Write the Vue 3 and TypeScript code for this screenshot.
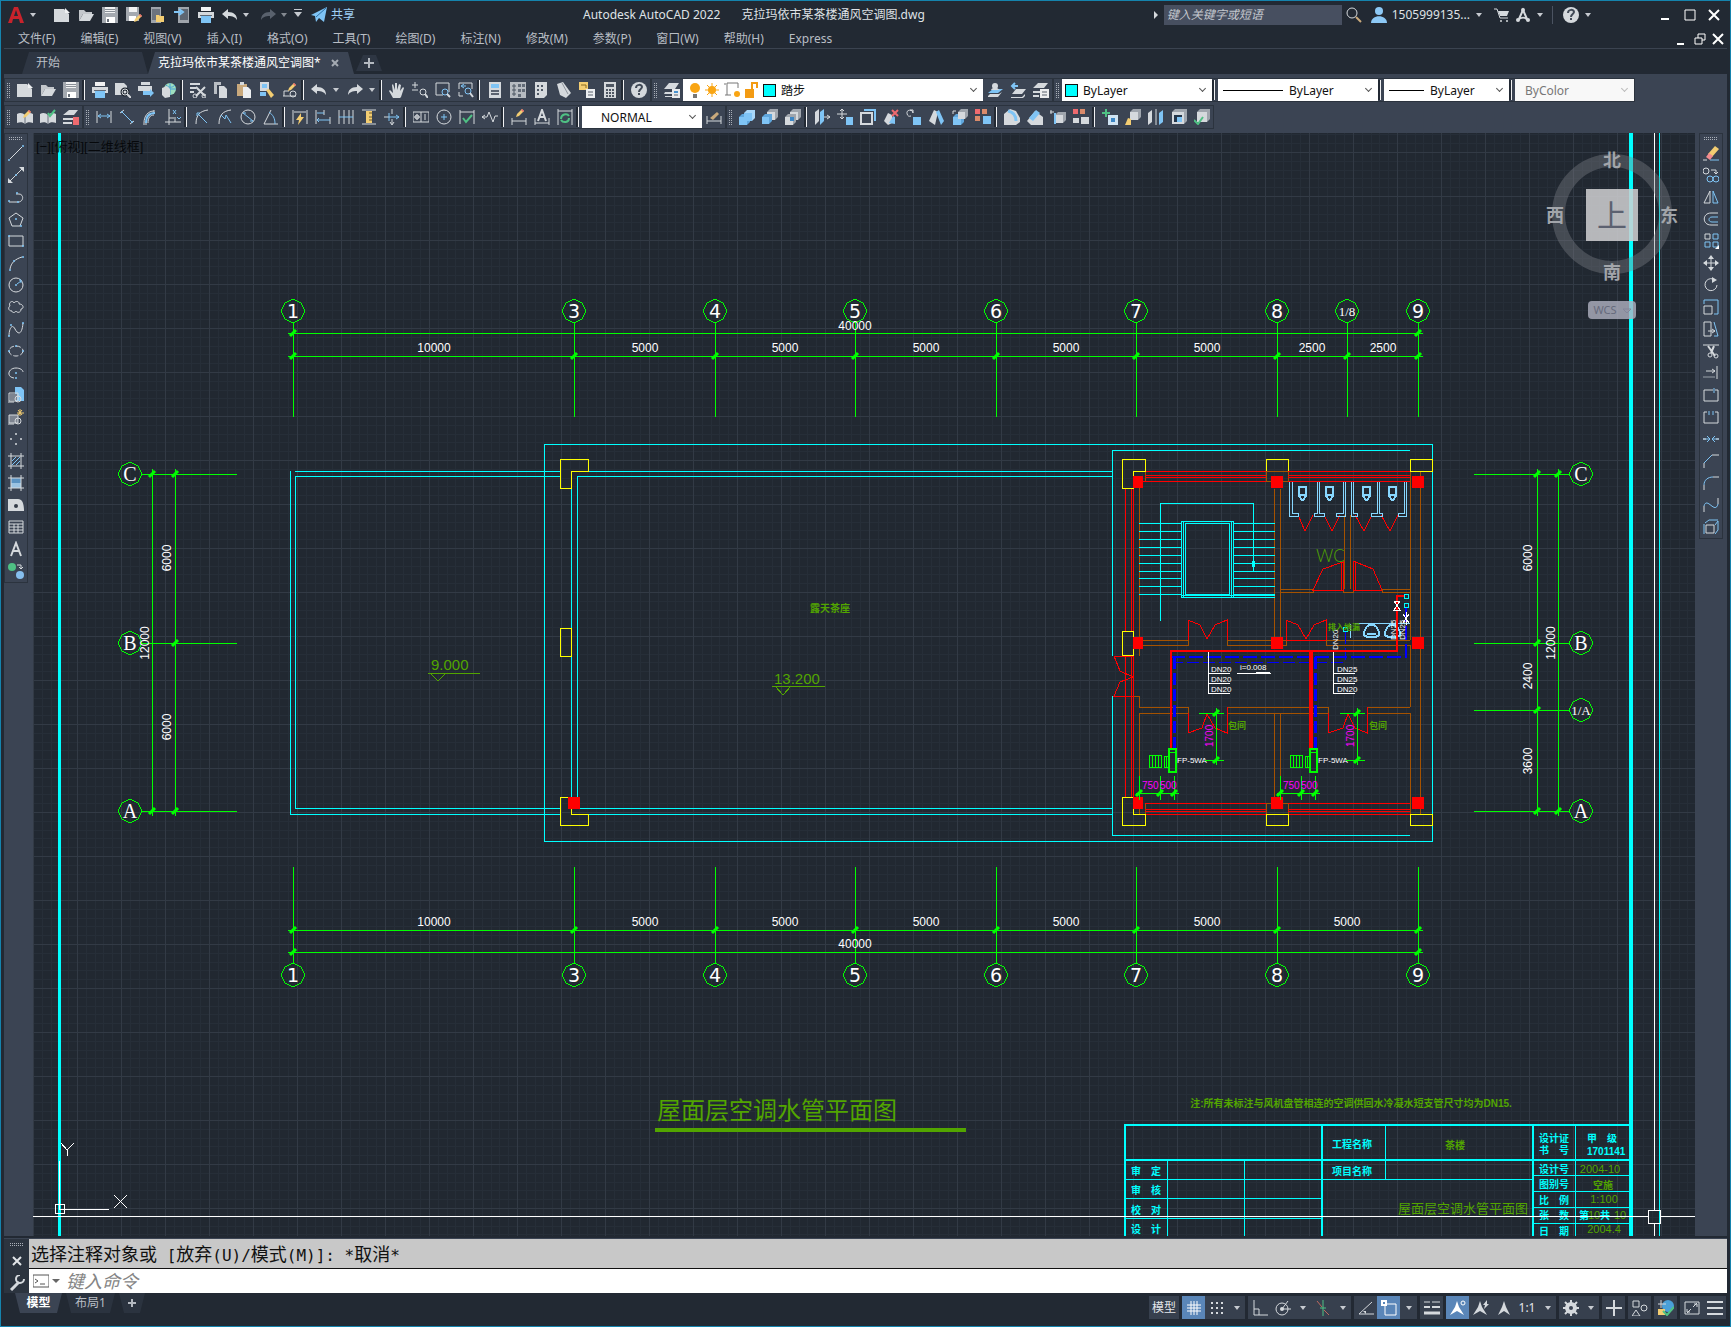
<script setup lang="ts">
import { ref } from 'vue'

const W = '#d5d9dd'
const B = '#7fc4f5'
const Y = '#f3cd72'
const G = '#4fc184'
const R = '#ee6a6f'
const D = '#3b4453'

const s = (d: string, c = W, w = 1) => `<path d="${d}" fill="none" stroke="${c}" stroke-width="${w}"/>`
const p = (d: string, c = W) => `<path d="${d}" fill="${c}"/>`
const ring = (x: number, y: number, r: number, c = W, w = 1) =>
  `<circle cx="${x}" cy="${y}" r="${r}" fill="none" stroke="${c}" stroke-width="${w}"/>`
const dot = (x: number, y: number, c = B, r = 1) => `<circle cx="${x}" cy="${y}" r="${r}" fill="${c}"/>`
const cube = (x: number, y: number, z: number, c = W, side = '#9fa5ad') =>
  p(`M${x} ${y + 3}l3-3h${z}v${z}l-3 3h-${z}z`, side) + p(`M${x} ${y + 3}h${z}v${z}h-${z}z`, c)
const pencil = (x: number, y: number) =>
  p(`M${x} ${y + 8}l1-3 5-5 2 2-5 5z`, Y) + p(`M${x + 5} ${y + 1}l1-1 2 2-1 1z`, R)

const icons: Record<string, string> = {
  new: p('M0 2h10l5 5v8H0z') + p('M11 1l5 5h-5z', '#eef0f2'),
  open: p('M1 14V3h5l2 2h6v2H5z', '#c3c7cc') + p('M1 14L5 7h11l-4 7z'),
  save: p('M0 0h16v16H0z', '#a4a9b0') + p('M3 0h10v6H3z', '#f1f2f3') + s('M3 2.500h10M3 4.500h10', '#8a9098') + p('M4 10h9v6H4z', '#fff') + p('M5 12h2v3H5z', '#6a717b'),
  saveas: p('M0 0h13v14H0z', '#a4a9b0') + p('M3 0h8v5H3z', '#f1f2f3') + p('M3 9h7v5H3z', '#fff') + pencil(8, 7),
  mobileOpen: p('M1 0h10v16H1z', '#9fa4ab') + p('M2 2h8v11H2z', '#6c737e') + p('M6 8h3l1 1h4v6H6z', Y),
  mobileSave: p('M4 0h11v16H4z', '#9fa4ab') + p('M6 2h8v11H6z', '#5e6672') + s('M0 5h7M5 2l4 3-4 3', B, 2),
  print: p('M3 0h10v4H3z', '#f1f2f3') + p('M0 5h16v6H0z') + p('M3 9h10v7H3z', B) + p('M2 8h12v1H2z', '#616975'),
  preview: p('M0 1h9l3 3v9H0z') + ring(10, 10, 3, '#1d242d', 3) + ring(10, 10, 3) + s('M12 12l4 4', W, 2),
  publish: p('M3 0h9v3H3zM0 4h14v5H0z') + p('M5 9h7V7l4 4-4 4v-2H5z', B),
  globe: dot(9, 7, '#9fe0c0', 6) + s('M3 7h12M9 1v12M5 3c3 3 6 3 9 0', '#4aa0d8') + p('M1 6l5-2 3 3v8l-5 1-3-3z'),
  cut: p('M0 1h10v2H0zM0 5h6v2H0zM0 9h4v2H0z') + s('M6 5l9 9M15 5l-9 9', W, 2) + ring(5, 14, 2) + ring(14, 14, 2),
  copy: p('M1 0h7v3H4v9H1z', '#b8bdc3') + p('M5 4h6l3 3v9H5z') + s('M5.500 4v12', D),
  paste: p('M1 2h10v12H1z', '#c9a97c') + p('M4 0h4v3H4z') + p('M7 5h5l3 3v8H7z', '#eceef0'),
  match: p('M1 0h9v9H1z') + p('M3 2h5v4H3z', B) + p('M1 10h6v4H1z', B) + p('M7 8l3-1 5 6-3 3z', Y),
  blockedit: s('M1 14h13M2 14V9h5') + ring(11, 12, 3) + pencil(6, 1),
  undo: p('M0 7l6-5v3c6 0 9 3 9 8-2-3-4-4-9-4v3z'),
  redo: p('M16 7l-6-5v3C4 5 1 8 1 13c2-3 4-4 9-4v3z'),
  redoDim: p('M16 7l-6-5v3C4 5 1 8 1 13c2-3 4-4 9-4v3z', '#59616d'),
  hand: p('M4 16L0 9l1-1 3 3L3 3l1-1 2 6V1h2v7l2-6 2 1-1 6 3-4 1 1-3 9-1 1z'),
  zoomRt: s('M3 0v6M0 3h6M0 8h6') + ring(11, 10, 3) + s('M13 12l3 4', W, 2),
  zoomWin: s('M1 1h13v9M1 1v12h7', W, 1) + ring(10, 10, 3, B) + s('M12 12l3 3', W, 2),
  zoomPrev: s('M1 7V1h13v6M1 10v4h4', W) + ring(10, 9, 3, B) + s('M12 11l3 4', W, 2) + s('M8 4H4M6 2L3 4l3 2', B),
  props: p('M2 0h12v16H2z') + p('M4 2h8v4H4z', B) + s('M4 9h8M4 12h8', '#5b6370', 2),
  center: p('M0 0h16v16H0z', '#b6bbc1') + s('M4 2v12M2 4h4M2 8h4M2 12h4', '#4d5663') + p('M8 2h3v3H8zM12 2h3v3h-3zM8 7h3v3H8zM12 7h3v3h-3zM8 12h3v3H8z', '#626b77'),
  palette: p('M2 0h12v13l-3 3H2z') + p('M4 3h2v2H4zM8 3h2v2H8zM4 7h2v2H4zM8 7h2v2H8zM4 11h2v2H4z', '#4d5663'),
  sheets: p('M1 2l6-2 8 11-5 5-6-3z') + s('M6 1l6 11', '#8d939b'),
  markup: p('M0 0h9v8H0z', Y) + s('M2 3h5v3', '#8b6a20') + p('M7 7h9v9H7z', '#eceef0') + s('M9 10h5M9 13h5', '#58616d'),
  calc: p('M2 0h12v16H2z') + p('M4 2h8v3H4z', '#4d5663') + s('M4 8h8M4 11h8M4 14h8', '#4d5663', 2) + s('M6.500 6v9M9.500 6v9', W),
  help: dot(8, 8, W, 8) + s('M5 6c0-4 6-4 6-1 0 2-3 2-3 5', '#414a57', 2) + p('M7 11h2v2H7z', '#414a57'),
  layers: p('M0 7l5-6h10l-4 6zM1 10h7v2H0zM1 14h7v1H1z') + p('M8 7h8v9H8z', '#e9ebed') + p('M10 9h4v2h-4z', '#4a93cf') + s('M10 13h4', '#58616d'),
  layerCur: p('M1 11l5-4h10l-5 4z', B) + p('M1 14l2-2h9l3-2-4 5H1z') + dot(8, 4, W, 3) + p('M4 8c1-3 7-3 8 0z'),
  layerPrev: p('M2 12l4-5h10l-4 5zM1 15h11l3-3v2l-2 2H1z') + s('M8 4H2M5 1L2 4l3 3', B, 2),
  layerSt: p('M0 6l5-5h10l-4 5zM0 9h8v2H0zM0 13h6v2H0z') + p('M7 7h9v9H7z', '#eceef0') + s('M9 10h5M9 13h5', '#58616d'),
  refEdit: p('M0 5c3-2 6-1 8 1 2-2 5-3 8-1v9c-3-1-6-1-8 1-2-2-5-2-8-1z') + s('M8 6v9', '#68717d') + pencil(6, 1),
  refOk: p('M0 5c3-2 6-1 8 1 2-2 5-3 8-1v9c-3-1-6-1-8 1-2-2-5-2-8-1z') + s('M8 6v9', '#68717d') + s('M8 4l2 3 5-6', G, 2),
  refLayer: p('M0 6l6-5h9l-4 5zM0 9h10v2H0zM0 13h9v2H0z') + p('M10 8h6v8h-6z', R),
  dimLin: s('M1 2v12M15 2v12') + s('M2 7h12M5 5L2 7l3 2M11 5l3 2-3 2', B),
  dimAl: s('M1 4l4-3M11 15l4-3') + s('M3 3l10 10', B) + dot(3, 3, B, 1) + dot(13, 13, B, 1),
  dimArc: s('M1 15h4M12 1v4M2 14C2 7 6 2 12 2M6 14c0-5 2-8 6-8') + s('M4 14C4 8 7 4 13 4', B, 2),
  dimOrd: s('M4 0v16M0 13h16M10 8v5M4 9h5') + s('M8 1l3 4M11 1L8 5M12 8l2 2 2-2', B),
  dimRad: s('M14 1C6 2 2 6 2 15') + s('M4 5l9 9M3 4l3 0M3 4v3', B),
  dimJog: s('M14 1C6 2 2 6 2 15') + s('M4 6l4 4 1-4 5 8', B),
  dimDia: ring(8, 8, 7) + s('M3 4l10 8M3 4h3M13 12h-3', B),
  dimAng: s('M8 1L1 15h14') + s('M6 3c4 3 6 6 6 12', B),
  dimQ: s('M1 1v14M15 1v14M2 3h12') + p('M9 4L4 11h3l-1 5 6-8H9z', Y),
  dimBase: s('M1 1v14M9 1v5M15 8v7') + s('M2 4h7M2 11h13M4 9l-2 2 2 2', B),
  dimCont: s('M1 1v14M6 1v14M11 1v14M15 1v14') + s('M1 8h14', B),
  dimSpace: s('M1 1h14M1 15h14') + p('M5 2h6v12H5z', Y) + s('M8 4h3M8 8h3M8 11h3', '#6d5a2a'),
  dimBreak: s('M8 0v5M8 10v5M6 13l2 3 2-3M0 8h5') + s('M5 8h10M12 6l3 2-3 2M5 4v8', B),
  tol: s('M0 3h16v10H0zM8 3v10') + ring(4, 8, 2) + s('M4 5v6M1 8h6M12 5v6', W),
  centerMark: ring(8, 8, 7) + s('M8 5v6M5 8h6', B),
  inspect: s('M1 1v14M15 1v14M1 3h14') + s('M4 9l3 4 6-7', G, 2),
  jogLine: s('M0 8h5M3 6L0 8l3 2') + s('M5 8l2-5 4 10 2-6h3', W),
  dimEdit: s('M1 9v7M15 9v7M1 12h14', W) + pencil(5, 0),
  dimText: s('M1 9v7M15 9v7M1 14h14', W) + s('M4 12L8 1l4 11M6 8h4', W, 2),
  dimUpd: s('M1 0v16M15 0v16M1 2h14', W) + s('M4 10c0-5 6-6 8-3M12 9c0 5-6 5-8 2', G, 2),
  dimStyle: s('M1 7v8M15 7v8M1 12h14', W) + p('M4 9l7-6 2 2-6 6z', '#c9a97c'),
  union: cube(0, 5, 8, B, '#5fa6dc') + cube(5, 1, 8, B, '#a9d8fa'),
  subtract: cube(5, 0, 8) + cube(0, 5, 7, B, '#5fa6dc'),
  intersect: cube(5, 0, 8) + cube(0, 5, 8) + p('M5 8h4v4H5z', '#3c86c4'),
  extrudeF: p('M1 3l4-3v12l-4 4z') + p('M6 3l4-3v12l-4 4z', B) + s('M10 8h6M13 6l3 2-3 2'),
  moveF: s('M5 0v10M0 5h10M3 2l2-2 2 2M3 8l2 2 2-2') + p('M9 8h7v8H9z', B),
  offsetF: s('M1 4h11v11H1z', W, 2) + s('M4 1h11v11', B, 2),
  deleteF: p('M1 12l4-8 4 2v8l-4 2z') + p('M6 14l4-7 2 1v7z', B) + s('M9 1l6 6M15 1L9 7', R, 2),
  rotateF: s('M7 4a3 3 0 1 0-2 3M4 1l3 0v3') + p('M7 8h8v8H7z', B),
  taperF: p('M0 12L5 1l4 2-3 13z') + p('M7 3l3-2 5 11-3 4z', B),
  copyF: cube(1, 5, 8, B, '#5fa6dc') + cube(6, 0, 7) + s('M1 5V2h3'),
  colorF: p('M0 0h5v5H0z', R) + p('M7 0h5v5H7zM0 7h5v5H0z', '#d98a6a') + p('M8 7h8v8H8z', B),
  filletE: p('M0 16V5l6-5 6 2 4 7v4l-4 3z') + s('M4 2c5 1 8 4 8 10', B, 3),
  chamferE: p('M0 12L8 2l8 6v8H4z') + p('M2 9l7-8 4 3-7 8z', B),
  copyE: cube(5, 3, 8) + s('M5 4v11', B, 2) + s('M0 3h4M1 1v4'),
  colorE: p('M0 0h5v5H0z', R) + p('M7 0h5v5H7z', '#d98a6a') + p('M0 9h6v5H0zM8 8h8v7H8z'),
  imprint: s('M4 0v8M0 4h8', G, 2) + p('M6 6h10v10H6z', '#cfe3f2') + p('M9 9h4v4H9z', '#3c86c4'),
  clean: cube(5, 0, 8) + p('M0 16l3-7 3 1v6z', Y),
  separate: p('M0 4l4-3v12l-4 3z') + p('M11 4l4-3v12l-4 3z', B) + s('M8 0v16', W),
  shell: cube(1, 0, 12) + p('M3 6h8v7H3z', '#24364a') + p('M6 8h5v5H6z', B),
  check: cube(3, 0, 10) + s('M0 11l4 4 5-7', G, 2),

  line: s('M2 14L14 2', W) + dot(1, 15) + dot(15, 1),
  xline: s('M2 14L14 2', W) + p('M0 16v-5l5 5zM16 0v5l-5-5z') + dot(8, 8),
  pline: s('M1 13h9c6 0 6-8 1-8H8', W) + dot(1, 12) + dot(9, 4) + dot(10, 13),
  polygon: s('M8 2l7 5-3 8H4L1 7z') + dot(8, 8) + dot(13, 15),
  rect: s('M1 3h14v10H1z') + dot(1, 3) + dot(15, 13),
  arc: s('M2 14C3 8 7 4 14 2', W) + dot(2, 15) + dot(6, 6) + dot(15, 2),
  circle: ring(8, 8, 7) + dot(8, 8) + s('M9 7l4-3M11 3h2v3', B),
  cloud: s('M4 12c-4 0-4-4-2-5-2-4 3-6 4-3 2-3 6-1 5 1 5 0 5 5 2 5 0 4-4 4-5 2-1 2-4 2-4 0z'),
  spline: s('M1 15C1 8 4 2 7 8s7 6 8-6') + dot(1, 15) + dot(3, 4) + dot(15, 2),
  ellipse: '<ellipse cx="8" cy="8" rx="7" ry="5" fill="none" stroke="#d5d9dd" stroke-dasharray="5 2"/>' + dot(1, 8) + dot(8, 3) + dot(15, 8),
  ellArc: s('M6 13C-2 12 0 3 8 3c4 0 7 2 7 4') + dot(8, 8) + dot(8, 13),
  insert: p('M7 0h6l3 3v11H7z', B) + p('M2 7h7v6H2z', '#7d8490') + s('M1 6h9v8H1zM0 15h6') + ring(10, 12, 3),
  block: p('M1 6h9v8H1z', '#7d8490') + s('M1 6h9v8H1zM0 15h6') + ring(10, 12, 3) + s('M12 0v7M9 4h7M10 1l4 5M14 1l-4 5', Y),
  points: dot(8, 3, W) + dot(3, 8, W) + dot(13, 8, W) + dot(8, 13, W),
  hatch: s('M0 3h16M0 13h16M3 0v16M13 0v16') + s('M4 8l4-4M4 12l8-8M8 12l4-4', B),
  gradient: p('M3 3h10v10H3z', '#5b93c2') + p('M3 8h10v5H3z', '#9bc3e2') + s('M0 3h16M0 13h16M3 0v16M13 0v16'),
  region: p('M0 2h10c4 0 6 4 6 12H0z') + dot(8, 9, '#333b48', 2),
  table: s('M1 2h14v12H1zM1 5h14M1 8h14M1 11h14M6 5v9M10 5v9'),
  mtext: s('M3 15L8 2l5 13M5 10h6', W, 2),
  addSel: dot(4, 4, G, 4) + dot(12, 12, '#86bfee', 4) + s('M9 2h4v4M11 4l2 2 2-2'),

  erase: s('M0 15h4') + s('M7 15h9', B) + p('M5 9L12 1l4 3-7 8z', Y) + p('M3 12l3-4 4 3-3 4z', '#f28b8f'),
  copyObj: ring(3, 4, 3) + s('M8 3h5v4M11 5l2 2 2-2') + ring(7, 12, 3, B) + ring(13, 12, 3, B),
  mirror: s('M7 2v12H1z') + s('M10 2v12h5z', B),
  offset: s('M15 2H8C-1 2-1 14 8 14h7') + s('M15 6H9c-4 0-4 5 0 5h6', B),
  array: s('M2 1h5v5H2z') + s('M10 1h5v5h-5zM2 9h5v5H2zM10 9h5v5h-5z', B) + p('M16 16h-4l4-4z', '#fff'),
  move: s('M8 1v14M1 8h14', W, 1) + p('M8 0l3 4H5zM8 16l3-4H5zM0 8l4-3v6zM16 8l-4-3v6z'),
  rotate: s('M10 2a6 6 0 1 0 4 6', W, 1) + p('M9 0l5 3-5 3z'),
  scale: s('M1 7h8v8H1z') + s('M1 5V1h14v14h-4', B),
  stretch: s('M1 1h7v14H1z') + s('M11 1l4 14h-4', B) + s('M5 10h7M9 8l3 2-3 2'),
  trim: s('M0 2h16', W) + s('M5 3l7 10M11 3L8 10', W, 2) + ring(7, 12, 2) + ring(13, 13, 2),
  extend: s('M14 1v13M3 6h9M9 4l3 2-3 2') + s('M0 12h12', '#9aa1aa'),
  breakPt: s('M10 3H1v11h14V3h-3') + s('M11 1v5', B),
  breakObj: s('M4 3H1v11h14V3h-3') + s('M6 2v4M10 2v4', B),
  join: s('M0 8h6M10 8h6M4 5l3 3-3 3M12 5L9 8l3 3', B) + s('M0 8h3M13 8h3'),
  chamfer: s('M1 15v-5M9 2h7') + s('M1 10l8-8', B),
  fillet: s('M1 15v-5M10 2h6') + s('M1 10c0-5 4-8 9-8', B),
  blend: s('M1 15V9M15 1v6') + s('M1 9C4-1 12 18 15 7', B),
  explode: s('M3 6h8v8H3z', W, 1) + s('M1 5v10M2 4l4-3h9M12 6l3-4v9l-3 4', B),

  gridS: s('M5 1v14M11 1v14M1 5h14M1 11h14M1 8h14M8 1v14', '#fff'),
  dots: [2, 7, 12].map((x) => [2, 7, 12].map((y) => p(`M${x} ${y}h2v2h-2z`)).join('')).join(''),
  ortho: s('M2 0v15h14M2 9h5v6'),
  polar: ring(7, 9, 6) + s('M7 9l6-8M7 9h9') + dot(7, 9, W, 2),
  iso: s('M2 1l5 6M14 15l-5-5', '#c0695f') + s('M8 0v16M5 8h6', G),
  track: s('M14 2L1 14h15') + p('M5 11h3v3z'),
  osnap: s('M4 4h11v11H4z', '#fff') + p('M0 0h6v6H0z', '#fff') + p('M2 2h2v2H2z', '#5a86b8'),
  weight: s('M0 2h6M8 2h8') + s('M0 7h6M8 7h8', W, 2) + s('M0 13h16', W, 3),
  annoVis: p('M7 1l2 6 5 8-7-4-7 4 5-8z', '#fff') + ring(13, 3, 2, '#fff'),
  annoAuto: p('M7 1l2 6 5 8-7-4-7 4 5-8z') + p('M14 0l-4 5h2l-1 4 5-5h-2z'),
  anno: p('M8 1l2 6 4 8-6-4-6 4 4-8z'),
  gear: ring(8, 8, 4, W, 4) + s('M8 0v16M0 8h16M2 2l12 12M14 2L2 14', W, 2) + dot(8, 8, D, 2),
  plus: s('M8 0v16M0 8h16', W, 2),
  isolate: s('M1 1h6v6H1zM4 10l4 6H0z') + ring(12, 8, 3),
  perf: dot(10, 6, '#4aa0d8', 6) + s('M3 0v8M0 4h8') + p('M0 9h7v6H0z', Y) + s('M5 11l4 4 7-8', G, 2),
  full: s('M1 2h14v12H1z') + s('M9 7l4-4M10 4h3v3M7 9l-4 4M3 9v3h3'),
  menu: s('M0 2h16M0 8h16M0 14h16', W, 2),

  share: p('M0 8L16 0l-3 15-5-4-3 4-1-6z', B) + s('M5 10L15 1', '#2b6fa5'),
  search: ring(6, 6, 5, W, 1) + s('M10 10l5 5', '#c9a97c', 2),
  user: dot(8, 4, '#8cc8f5', 4) + p('M0 16c0-9 16-9 16 0z', '#8cc8f5'),
  cart: s('M0 2h3l3 9h8') + p('M4 4h11l-2 5H6z') + dot(7, 14, W, 1) + dot(13, 14, W, 1),
  adsk: s('M4 12L8 3l4 9M3 13c3-3 7-3 10 0', W, 2) + dot(3, 13, W, 2) + dot(13, 13, W, 2) + dot(8, 3, W, 2),
  wrench: s('M2 15l8-8', W, 3) + s('M15 4a4 4 0 1 1-4-4', W, 2),
  prompt: s('M0 2h16v12H0zM2 6l3 2-3 2M7 11h5', '#555'),
}

const std = 'new open save | print preview publish globe | cut copy paste match blockedit | undo v redo v | hand zoomRt zoomWin zoomPrev | props center palette sheets markup calc | help'.split(' ')
const refTools = 'refEdit refOk refLayer'.split(' ')
const dims = 'dimLin dimAl dimArc dimOrd | dimRad dimJog dimDia dimAng | dimQ dimBase dimCont dimSpace dimBreak | tol centerMark inspect jogLine | dimEdit dimText dimUpd |'.split(' ')
const solids = 'union subtract intersect | extrudeF moveF offsetF deleteF rotateF taperF copyF colorF | filletE chamferE copyE colorE | imprint clean separate shell check'.split(' ')
const layerTools = 'layerCur layerPrev layerSt'.split(' ')
const drawTools = 'line xline pline polygon rect arc circle cloud spline ellipse ellArc insert block points hatch gradient region table mtext addSel'.split(' ')
const editTools = 'erase copyObj mirror offset array move rotate scale stretch trim extend breakPt breakObj join chamfer fillet blend explode'.split(' ')
const quick = 'new open save saveas mobileOpen mobileSave print'.split(' ')
const menus = ['文件(F)', '编辑(E)', '视图(V)', '插入(I)', '格式(O)', '工具(T)', '绘图(D)', '标注(N)', '修改(M)', '参数(P)', '窗口(W)', '帮助(H)', 'Express']
const statusGroups = ['gridS* dots v', 'ortho polar v iso v', 'track osnap* v', 'weight', 'annoVis* annoAuto anno 1:1 v', 'gear v', 'plus', 'isolate', 'perf', 'full menu'].map((g) => g.split(' '))

const command = ref('')
const query = ref('')

// Drawing data
const oct = (x: number, y: number) => `M${x} ${y - 12}l8 4 4 8-4 8-8 4-8-4-4-8 4-8z`
const gridX = [
  { x: 293, t: '1' }, { x: 574, t: '3' }, { x: 715, t: '4' }, { x: 855, t: '5' }, { x: 996, t: '6' },
  { x: 1136, t: '7' }, { x: 1277, t: '8' }, { x: 1418, t: '9' },
]
const topAxes = [...gridX, { x: 1347, t: '1/8' }]
const topDims = [
  { x: 434, t: '10000' }, { x: 645, t: '5000' }, { x: 785, t: '5000' }, { x: 926, t: '5000' }, { x: 1066, t: '5000' },
  { x: 1207, t: '5000' }, { x: 1312, t: '2500' }, { x: 1383, t: '2500' },
]
const bottomDims = [...topDims.slice(0, 6), { x: 1347, t: '5000' }]
const leftAxes = [{ y: 474, t: 'C' }, { y: 643, t: 'B' }, { y: 811, t: 'A' }]
const rightAxes = [...leftAxes, { y: 710, t: '1/A' }]
const vertDims = [
  { x: 171, y: 558, t: '6000' }, { x: 171, y: 727, t: '6000' }, { x: 149, y: 643, t: '12000' },
  { x: 1532, y: 558, t: '6000' }, { x: 1532, y: 676, t: '2400' }, { x: 1532, y: 761, t: '3600' }, { x: 1555, y: 643, t: '12000' },
]
const ticks: number[][] = [
  ...topAxes.map((a) => [a.x, 356]), ...gridX.map((a) => [a.x, 930]),
  [293, 333], [1418, 333], [293, 952], [1418, 952],
  ...leftAxes.map((a) => [175, a.y]), [152, 474], [152, 811],
  ...rightAxes.map((a) => [1537, a.y]), [1558, 474], [1558, 811],
]
const treads = [523, 531, 539, 547, 555, 563, 571, 578, 586, 594]
const squares = [
  [568, 797], [1271, 476], [1412, 476], [1271, 637], [1412, 637], [1271, 797], [1412, 797],
]
const rooms = [0, 141]
const blockLabels = [
  { x: 1332, y: 1148, t: '工程名称' }, { x: 1332, y: 1175, t: '项目名称' },
  { x: 1539, y: 1142, t: '设计证' }, { x: 1539, y: 1154, t: '书　号' }, { x: 1587, y: 1142, t: '甲　级' }, { x: 1587, y: 1155, t: '1701141' },
  { x: 1539, y: 1173, t: '设计号' }, { x: 1539, y: 1188, t: '图别号' }, { x: 1539, y: 1204, t: '比　例' }, { x: 1539, y: 1219, t: '张　数' }, { x: 1539, y: 1235, t: '日　期' },
  { x: 1131, y: 1175, t: '审　定' }, { x: 1131, y: 1194, t: '审　核' }, { x: 1131, y: 1214, t: '校　对' }, { x: 1131, y: 1233, t: '设　计' },
  { x: 1579, y: 1219, t: '第' }, { x: 1600, y: 1219, t: '共' },
]
const blockValues = [
  { x: 1600, y: 1173, t: '2004-10' }, { x: 1604, y: 1203, t: '1:100' }, { x: 1594, y: 1219, t: '10' }, { x: 1620, y: 1219, t: '10' }, { x: 1604, y: 1233, t: '2004.4' },
]
</script>

<template>
  <div class="frame">
    <header class="title-bar">
      <button class="logo" aria-label="应用程序菜单">
        <svg width="16" height="18" viewBox="0 0 16 18"><path d="M0 17L6 1h4l6 16h-4l-1-4H5l-1 4zM6 10h4L8 4z" fill="#c8232c" fill-rule="evenodd" /></svg>
        <span class="caret"></span>
      </button>
      <div class="quick">
        <button v-for="n in quick" :key="n" class="tool24" :aria-label="n"><svg class="ico" viewBox="0 0 16 16" v-html="icons[n]"></svg></button>
        <button class="tool24" aria-label="undo"><svg class="ico" viewBox="0 0 16 16" v-html="icons.undo"></svg></button>
        <span class="caret wide"></span>
        <button class="tool24" aria-label="redo"><svg class="ico" viewBox="0 0 16 16" v-html="icons.redoDim"></svg></button>
        <span class="caret wide dim-caret"></span>
        <span class="caret bar-caret"></span>
      </div>
      <button class="share"><svg class="ico" viewBox="0 0 16 16" v-html="icons.share"></svg>共享</button>
      <h1>Autodesk AutoCAD 2022<span>克拉玛依市某茶楼通风空调图.dwg</span></h1>
      <div class="account">
        <span class="arrow-r"></span>
        <input v-model="query" class="search" type="text" aria-label="搜索" placeholder="键入关键字或短语" />
        <button class="tool24" aria-label="search"><svg class="ico" viewBox="0 0 16 16" v-html="icons.search"></svg></button>
        <button class="user"><svg class="ico" viewBox="0 0 16 16" v-html="icons.user"></svg>1505999135...<span class="caret"></span></button>
        <button class="tool24" aria-label="cart"><svg class="ico" viewBox="0 0 16 16" v-html="icons.cart"></svg></button>
        <button class="drop" aria-label="autodesk"><svg class="ico" viewBox="0 0 16 16" v-html="icons.adsk"></svg><span class="caret"></span></button>
        <i class="vline"></i>
        <button class="drop" aria-label="help"><svg class="ico" viewBox="0 0 16 16" v-html="icons.help"></svg><span class="caret"></span></button>
      </div>
      <div class="win">
        <button aria-label="最小化"><svg width="12" height="12"><path d="M1 10h8" stroke="#fff" stroke-width="2" /></svg></button>
        <button aria-label="最大化"><svg width="12" height="12"><path d="M1 1h10v10H1z" fill="none" stroke="#fff" stroke-width="1" /></svg></button>
        <button aria-label="关闭"><svg width="12" height="12"><path d="M1 1l10 10M11 1L1 11" stroke="#fff" stroke-width="2" /></svg></button>
      </div>
    </header>

    <nav class="menu-bar">
      <button v-for="m in menus" :key="m">{{ m }}</button>
      <div class="doc-win">
        <button aria-label="最小化文档"><svg width="12" height="12"><path d="M1 11h7" stroke="#fff" stroke-width="2" /></svg></button>
        <button aria-label="还原文档"><svg width="12" height="12"><path d="M1 5h7v6H1zM4 5V1h7v6H8" fill="none" stroke="#fff" stroke-width="1" /></svg></button>
        <button aria-label="关闭文档"><svg width="12" height="12"><path d="M1 1l10 10M11 1L1 11" stroke="#fff" stroke-width="2" /></svg></button>
      </div>
    </nav>

    <div class="file-tabs">
      <button class="ftab start">开始</button>
      <button class="ftab active">克拉玛依市某茶楼通风空调图*<svg width="8" height="8"><path d="M1 1l6 6M7 1L1 7" stroke="#a4aab2" stroke-width="2" /></svg></button>
      <button class="ftab add" aria-label="新建"><svg width="10" height="10"><path d="M5 0v10M0 5h10" stroke="#b4b9c0" stroke-width="2" /></svg></button>
    </div>

    <div class="toolbars">
      <div class="row">
        <div class="bar">
          <i class="grip"></i>
          <template v-for="(n, i) in std" :key="i">
            <i v-if="n === '|'" class="sep"></i>
            <i v-else-if="n === 'v'" class="caret cell"></i>
            <button v-else class="tool" :aria-label="n"><svg class="ico" viewBox="0 0 16 16" v-html="icons[n]"></svg></button>
          </template>
        </div>
        <div class="bar">
          <i class="grip"></i>
          <button class="tool" aria-label="layers"><svg class="ico" viewBox="0 0 16 16" v-html="icons.layers"></svg></button>
          <label class="combo layer">
            <svg width="74" height="18" viewBox="0 0 74 18">
              <circle cx="8" cy="7" r="5" fill="#f9a513" /><path d="M6 13h4v4H6z" fill="#777" />
              <circle cx="25" cy="9" r="4" fill="#f9a513" /><path d="M25 2v14M18 9h14M20 4l10 10M30 4L20 14" stroke="#f9a513" />
              <path d="M40 2h11M40 2v12M38 4V2M51 2v5M38 14h6" stroke="#777" fill="none" stroke-width="1" /><circle cx="50" cy="13" r="3" fill="#f9a513" />
              <path d="M58 8h9v9h-9z" fill="#f39b13" /><path d="M65 8V2h5v5" fill="none" stroke="#f39b13" stroke-width="2" />
            </svg>
            <i class="swatch"></i>
            <select aria-label="图层"><option>踏步</option></select>
            <i class="chev"></i>
          </label>
          <button v-for="n in layerTools" :key="n" class="tool" :aria-label="n"><svg class="ico" viewBox="0 0 16 16" v-html="icons[n]"></svg></button>
        </div>
        <div class="bar">
          <i class="grip"></i>
          <label class="combo color"><i class="swatch"></i><select aria-label="颜色"><option>ByLayer</option></select><i class="chev"></i></label>
          <i class="sep"></i>
          <label class="combo ltype"><i class="stroke"></i><select aria-label="线型"><option>ByLayer</option></select><i class="chev"></i></label>
          <i class="sep"></i>
          <label class="combo lweight"><i class="stroke"></i><select aria-label="线宽"><option>ByLayer</option></select><i class="chev"></i></label>
          <i class="sep"></i>
          <label class="combo plot"><select disabled aria-label="打印样式"><option>ByColor</option></select><i class="chev"></i></label>
        </div>
      </div>
      <div class="row">
        <div class="bar">
          <i class="grip"></i>
          <button v-for="n in refTools" :key="n" class="tool" :aria-label="n"><svg class="ico" viewBox="0 0 16 16" v-html="icons[n]"></svg></button>
        </div>
        <div class="bar">
          <i class="grip"></i>
          <template v-for="(n, i) in dims" :key="i">
            <i v-if="n === '|'" class="sep"></i>
            <button v-else class="tool" :aria-label="n"><svg class="ico" viewBox="0 0 16 16" v-html="icons[n]"></svg></button>
          </template>
          <label class="combo style"><select aria-label="标注样式"><option>NORMAL</option></select><i class="chev"></i></label>
          <button class="tool" aria-label="dimStyle"><svg class="ico" viewBox="0 0 16 16" v-html="icons.dimStyle"></svg></button>
        </div>
        <div class="bar">
          <i class="grip"></i>
          <template v-for="(n, i) in solids" :key="i">
            <i v-if="n === '|'" class="sep"></i>
            <button v-else class="tool" :aria-label="n"><svg class="ico" viewBox="0 0 16 16" v-html="icons[n]"></svg></button>
          </template>
        </div>
      </div>
    </div>

    <main class="work">
      <aside class="side left">
        <div class="vbar">
          <i class="hgrip"></i>
          <button v-for="n in drawTools" :key="n" :aria-label="n"><svg class="ico" viewBox="0 0 16 16" v-html="icons[n]"></svg></button>
        </div>
      </aside>

      <section class="canvas">
        <svg class="drawing" viewBox="33 133 1662 1103" preserveAspectRatio="xMinYMin slice">
          <defs>
            <pattern id="grid" x="33" y="152" width="44" height="44" patternUnits="userSpaceOnUse">
              <path d="M9 0h1v44h-1zM18 0h1v44h-1zM26 0h1v44h-1zM35 0h1v44h-1zM0 9h44v1H0zM0 18h44v1H0zM0 26h44v1H0zM0 35h44v1H0z" fill="#262e38" />
              <path d="M0 0h1v44H0zM0 0h44v1H0z" fill="#323a45" />
            </pattern>
          </defs>
          <rect x="33" y="133" width="1662" height="1103" fill="#212831" />
          <rect x="33" y="133" width="1662" height="1103" fill="url(#grid)" />

          <!-- sheet border -->
          <g fill="#00ffff" shape-rendering="crispEdges">
            <rect x="58" y="133" width="3" height="1103" />
            <rect x="1629" y="133" width="4" height="1103" />
            <rect x="1659" y="133" width="1" height="1103" />
          </g>
          <text class="cn view-label" x="36" y="151">[−][俯视][二维线框]</text>

          <!-- axes -->
          <g class="ln green">
            <path v-for="a in topAxes" :key="'ta' + a.x" :d="`M${a.x} 323V417` + oct(a.x, 311)" />
            <path v-for="a in gridX" :key="'ba' + a.x" :d="`M${a.x} 867V963` + oct(a.x, 975)" />
            <path v-for="a in leftAxes" :key="'la' + a.y" :d="`M142 ${a.y}H237` + oct(130, a.y)" />
            <path v-for="a in rightAxes" :key="'ra' + a.y" :d="`M1474 ${a.y}H1569` + oct(1581, a.y)" />
            <path d="M288 333H1423M288 356H1423M288 930H1423M288 952H1423M152 469V816M175 469V816M1537 469V816M1558 469V816" />
          </g>
          <path v-for="(k, i) in ticks" :key="'tk' + i" :d="`M${k[0] - 3} ${k[1] + 3}l6-6`" stroke="#00ff00" stroke-width="3" />

          <g class="num" text-anchor="middle">
            <template v-for="a in topAxes" :key="'tt' + a.x">
              <text :class="a.t.length > 1 ? 'frac' : 'big'" :x="a.x" :y="a.t.length > 1 ? 316 : 318">{{ a.t }}</text>
            </template>
            <text v-for="a in gridX" :key="'bt' + a.x" class="big" :x="a.x" y="982">{{ a.t }}</text>
            <text v-for="a in leftAxes" :key="'lt' + a.y" class="letter" x="130" :y="a.y + 7">{{ a.t }}</text>
            <text v-for="a in rightAxes" :key="'rt' + a.y" :class="a.t.length > 1 ? 'frac' : 'letter'" x="1581" :y="a.t.length > 1 ? a.y + 5 : a.y + 7">{{ a.t }}</text>
            <text v-for="d in topDims" :key="'td' + d.x" class="dim" :x="d.x" y="352">{{ d.t }}</text>
            <text v-for="d in bottomDims" :key="'bd' + d.x" class="dim" :x="d.x" y="926">{{ d.t }}</text>
            <text class="dim" x="855" y="330">40000</text>
            <text class="dim" x="855" y="948">40000</text>
            <text v-for="(d, i) in vertDims" :key="'vd' + i" class="dim" :transform="`translate(${d.x} ${d.y}) rotate(-90)`">{{ d.t }}</text>
          </g>

          <!-- roof outlines -->
          <path class="ln cyan" d="M290 471V814H560M295 808V476M295 471H560M295 476H560M295 808H560M588 471H1112M577 476H1112M577 808H1112M588 814H1112M571 488V797M577 476V808M544 444H1432V841H544zM1410 450H1112V656M1112 696V835H1410" />

          <!-- walls -->
          <path class="ln brown" d="M1139 481V640M1139 645V656M1139 696V707H1188V713M1139 714V814M1274 489V637M1280 489V637M1410 471V640M1420 471V814M1344 515V589M1350 515V589M1280 589H1313V592H1280M1343 589V592H1353V589M1382 589V592H1410M1382 589H1410M1139 640H1188V645H1139M1271 640H1227V645H1271M1283 640H1286V645H1283M1410 640H1326V645H1410V707M1114 696H1139M1139 713H1188M1227 707H1328V713H1227zM1410 707H1367V713H1410V803M1274 713V797M1280 713V797M1266 471H1288V481H1266zM1266 803H1288V814H1266zM1145 471V481H1133M1133 814H1145V803M1410 803V814H1420M1410 481V471H1420" />
          <path class="ln red" d="M1145 471H1266M1145 475H1266M1145 477H1266M1133 481H1266M1288 471H1410M1288 475H1410M1288 477H1410M1288 481H1410M1145 803H1266M1145 809H1266M1145 811H1266M1133 814H1266M1288 803H1410M1288 809H1410M1288 811H1410M1288 814H1410M1125 488V631M1131 488V631M1133 488V631M1125 655V797M1131 655V797M1133 655V797" />

          <!-- doors -->
          <path class="ln red" d="M1114 656H1133M1114 656L1120 671 1133 677 1120 682 1114 696H1133M1298 515L1305 531 1313 515M1324 515L1332 531 1340 515M1355 515L1364 531 1372 515M1381 515L1390 531 1398 515M1313 590L1323 569 1343 562V590zM1341 562V590M1353 590V561L1373 569 1382 590M1355 562V590M1353 590H1382M1188 640V620L1200 625 1207 639 1215 625 1227 620V640M1286 640V620L1298 625 1306 639 1314 625 1326 620V640M1286 640H1326M1188 713V733L1202 728 1207 714 1215 728 1227 733V707M1328 713V733L1343 728 1348 714 1355 728 1367 733V707" />

          <!-- stairs -->
          <g class="ln cyan">
            <path d="M1160 621V503H1253V571M1181 521H1233V597H1181zM1185 523H1229V594H1185zM1183 521V597M1231 521V597M1181 595H1275M1233 597H1275" />
            <path v-for="t in treads" :key="t" :d="`M1139 ${t}H1181M1233 ${t}H1275`" />
            <path d="M1252 561V567M1254 561V567" />
          </g>

          <!-- sanitary -->
          <g class="ln sky">
            <path d="M1289 482V516H1298V513H1292V482M1317 482V513H1314V516H1324V513H1319V482M1343 482V513H1336V516H1345V482M1351 482V516H1357V513H1353V482M1377 482V513H1371V516H1382V513H1379V482M1404 482V513H1398V516H1406V482" />
            <path v-for="x in [1299, 1326, 1363, 1389]" :key="x" stroke-width="2" :d="`M${x} 487h7v9l-3 4h-1l-3-4zM${x} 495h7`" />
            <path d="M1355 623H1410M1350 624V638" />
            <path stroke-width="2" d="M1364 635c0-14 15-14 15 0l-3 2h-9zM1367 634h9M1385 635c0-14 15-14 15 0l-3 2h-9z" />
          </g>

          <!-- columns -->
          <path class="ln yellow" d="M560 459H588V471H571V488H560zM560 628H571V656H560zM560 797H571V814H588V825H560zM1122 459H1145V471H1133V488H1122zM1122 631H1133V655H1122zM1122 797H1133V814H1145V825H1122zM1266 471V459H1288V471M1266 814V825H1288V814zM1410 471V459H1432V471zM1410 814V825H1432V814z" />
          <g fill="#ff0000">
            <rect v-for="(q, i) in squares" :key="'q' + i" :x="q[0]" :y="q[1]" width="12" height="12" />
            <rect x="1133" y="476" width="10" height="12" /><rect x="1133" y="637" width="10" height="12" /><rect x="1133" y="797" width="10" height="12" />
          </g>

          <!-- pipes -->
          <g fill="none" shape-rendering="crispEdges">
            <path d="M1406 608V657H1171" stroke="#0000ff" stroke-width="2" stroke-dasharray="14 4" />
            <path d="M1345 632V662H1174" stroke="#0000ff" stroke-width="1" stroke-dasharray="12 4" />
            <path d="M1174 657V748M1315 657V748" stroke="#0000ff" stroke-width="3" stroke-dasharray="12 4" />
            <path d="M1171 748V651H1397V596H1404" stroke="#ff0000" stroke-width="2" />
            <path d="M1311 651V748" stroke="#ff0000" stroke-width="4" />
          </g>
          <path class="ln cyan" d="M1404 594h4v4h-4zM1404 603h4v4h-4zM1343 627h4v4h-4z" />
          <path class="ln white" d="M1208 652V693H1230M1208 673H1230M1208 683H1230M1333 652V693H1355M1333 673H1355M1333 683H1355M1237 673H1271M1256 672H1270M1394 601l6 9h-6l6-9zM1403 614l6 9M1409 614l-6 9M1406 612v13" />
          <g class="cad small" fill="#fff">
            <template v-for="x in [1211, 1337]" :key="'dn' + x">
              <text :x="x" y="672">{{ x === 1211 ? 'DN20' : 'DN25' }}</text>
              <text :x="x" y="682">{{ x === 1211 ? 'DN20' : 'DN25' }}</text>
              <text :x="x" y="692">DN20</text>
            </template>
            <text x="1240" y="670">i=0.008</text>
            <text x="1177" y="763">FP-5WA</text>
            <text x="1318" y="763">FP-5WA</text>
            <text transform="translate(1338 650) rotate(-90)">DN20</text>
            <text transform="translate(1396 640) rotate(-90)">DN25</text>
            <text transform="translate(1405 640) rotate(-90)">DN25</text>
          </g>

          <!-- fan coils and local dimensions -->
          <g v-for="r in rooms" :key="'room' + r" :transform="`translate(${r} 0)`">
            <path class="ln green" d="M1199 713H1224M1205 760H1224M1216 708V765M1139 776V800M1160 776V800M1174 776V800M1136 793H1179M1149 755H1161V767H1149zM1152 755V767M1155 755V767M1158 755V767M1164 756H1168V767H1164zM1166 756V767M1169 749H1175V771H1169zM1168 748H1176V772H1168zM1168 752H1176" />
            <path d="M1213 716l6-6M1213 763l6-6M1136 796l6-6M1157 796l6-6M1171 796l6-6" stroke="#00ff00" stroke-width="3" />
            <g class="cad local" fill="#ff00ff">
              <text x="1142" y="789">750</text>
              <text x="1160" y="789">500</text>
              <text transform="translate(1213 747) rotate(-90)">1700</text>
            </g>
            <text class="cn bold leaf" x="1228" y="729" font-size="9">包间</text>
          </g>

          <!-- annotations -->
          <g class="leaf">
            <text class="cn bold" x="1328" y="630" font-size="8">排入地漏</text>
            <text class="thin" x="1316" y="562" font-size="17">WC</text>
            <text class="cad" x="431" y="670" font-size="15">9.000</text>
            <text class="cad" x="774" y="684" font-size="15">13.200</text>
            <text class="cn bold" x="810" y="612" font-size="10">露天茶座</text>
            <text class="cn" x="657" y="1119" font-size="24">屋面层空调水管平面图</text>
            <text class="cn bold" x="1351" y="1107" font-size="10" text-anchor="middle">注:所有未标注与风机盘管相连的空调供回水冷凝水短支管尺寸均为DN15.</text>
            <text class="cn" x="1398" y="1213" font-size="13">屋面层空调水管平面图</text>
            <text class="cn bold" x="1445" y="1149" font-size="10">茶楼</text>
            <text class="cn bold" x="1593" y="1189" font-size="10">空施</text>
            <text v-for="(v, i) in blockValues" :key="'bv' + i" class="cad value" :x="v.x" :y="v.y" text-anchor="middle">{{ v.t }}</text>
          </g>
          <path class="ln" stroke="#52a500" d="M428 673H480M430 673l8 8 8-8M772 686H825M775 686l8 9 8-9" />
          <rect x="655" y="1128" width="311" height="4" fill="#52a500" />

          <!-- title block -->
          <g class="ln cyan">
            <path d="M1167 1160V1236M1244 1160V1236M1385 1125V1179M1575 1125V1236M1125 1179H1532M1125 1198H1321M1125 1218H1321M1532 1175H1631M1532 1191H1631M1532 1207H1631M1532 1223H1631" />
            <path d="M1125 1236V1125H1631M1125 1160H1631M1322 1125V1236M1533 1125V1236" stroke-width="2" />
          </g>
          <text v-for="(b, i) in blockLabels" :key="'bl' + i" class="cn bold" fill="#00ffff" font-size="10" :x="b.x" :y="b.y">{{ b.t }}</text>

          <!-- UCS icon and crosshair -->
          <path class="ln white" d="M59 1161V1209H109M55 1204h9v9h-9zM61 1143l6 7 7-7M67 1150v6M114 1195l13 13M127 1195l-13 13" />
          <path class="ln white" d="M33 1216H1648M1660 1216H1695M1654 133V1210M1654 1223V1236M1648 1210h12v13h-12z" />
        </svg>

        <div class="viewcube">
          <span class="dir">北</span>
          <div class="mid"><span class="dir">西</span><button class="face">上</button><span class="dir">东</span></div>
          <span class="dir">南</span>
          <button class="wcs">WCS<svg width="8" height="5"><path d="M0 1h8L4 5z" fill="none" stroke="#83869a" /></svg></button>
        </div>
      </section>

      <aside class="side right">
        <div class="vbar">
          <i class="hgrip"></i>
          <button v-for="n in editTools" :key="n" :aria-label="n"><svg class="ico" viewBox="0 0 16 16" v-html="icons[n]"></svg></button>
        </div>
      </aside>
    </main>

    <section class="command">
      <div class="cmd-side">
        <i class="hgrip"></i>
        <button aria-label="关闭命令行"><svg width="10" height="10"><path d="M1 1l8 8M9 1L1 9" stroke="#e2e5e8" stroke-width="2" /></svg></button>
        <button aria-label="自定义"><svg class="ico" viewBox="0 0 16 16" v-html="icons.wrench"></svg></button>
      </div>
      <div class="cmd-main">
        <p class="history">选择注释对象或<b> [</b>放弃<b>(U)/</b>模式<b>(M)]: *</b>取消<b>*</b></p>
        <div class="prompt">
          <svg class="ico" viewBox="0 0 16 16" v-html="icons.prompt"></svg>
          <i class="caret dark"></i>
          <input v-model="command" type="text" aria-label="命令" placeholder="键入命令" />
        </div>
      </div>
    </section>

    <footer class="bottom">
      <div class="layouts">
        <button class="ltab on">模型</button>
        <button class="ltab second">布局1</button>
        <button class="ltab plus" aria-label="新建布局"><svg width="10" height="10"><path d="M5 1v8M1 5h8" stroke="#b4b9c0" stroke-width="2" /></svg></button>
      </div>
      <div class="status">
        <div class="sgroup"><button class="txt">模型</button></div>
        <div v-for="(g, i) in statusGroups" :key="i" class="sgroup">
          <template v-for="(n, j) in g" :key="j">
            <i v-if="n === 'v'" class="caret scell"></i>
            <button v-else-if="n === '1:1'" class="ratio">1:1</button>
            <button v-else :class="{ lit: n.endsWith('*') }" :aria-label="n"><svg class="ico" viewBox="0 0 16 16" v-html="icons[n.replace('*', '')]"></svg></button>
          </template>
        </div>
      </div>
    </footer>
  </div>
</template>

<style>
body {
  margin: 0;
  background: #222933;
}
</style>

<style scoped>
.frame {
  box-sizing: border-box;
  display: flex;
  flex-direction: column;
  min-height: 100vh;
  padding: 0 3px;
  border: 1px solid #1583ad;
  background: #222933;
  color: #b9bec5;
  font: 12px/16px 'Noto Sans', 'Noto Sans CJK SC', sans-serif;
}
button {
  display: flex;
  align-items: center;
  justify-content: center;
  padding: 0;
  border: 0;
  background: none;
  color: inherit;
  font: inherit;
  white-space: nowrap;
}
.ico {
  width: 16px;
  height: 16px;
  flex: none;
}
.caret {
  width: 0;
  height: 0;
  flex: none;
  border: 3px solid transparent;
  border-top: 4px solid #c6cad0;
  border-bottom: 0;
}
.title-bar {
  display: flex;
  align-items: center;
  height: 27px;
  color: #dfe2e6;
}
.logo {
  gap: 6px;
  margin-left: 4px;
}
.quick {
  display: flex;
  align-items: center;
  margin-left: 14px;
}
.tool24 {
  width: 24px;
}
.caret.wide {
  margin: 0 7px 0 1px;
}
.caret.dim-caret {
  opacity: 0.6;
}
.caret.bar-caret {
  position: relative;
  border-width: 5px 4px 0;
  margin-right: 9px;
}
.caret.bar-caret::before {
  content: '';
  position: absolute;
  top: -8px;
  left: -4px;
  width: 8px;
  height: 1px;
  background: #c6cad0;
}
.share {
  gap: 4px;
  color: #9fd0f5;
}
h1 {
  flex: 1;
  margin: 0;
  padding-left: 228px;
  font: inherit;
  white-space: nowrap;
}
h1 span {
  margin-left: 21px;
}
.account {
  display: flex;
  align-items: center;
}
.arrow-r {
  border: 4px solid transparent;
  border-left-color: #d5d9dd;
  border-right: 0;
  margin-right: 6px;
}
.search {
  box-sizing: border-box;
  width: 178px;
  height: 20px;
  padding: 0 3px;
  border: 0;
  background: #474f60;
  color: #dfe2e6;
  font: italic 12px 'Noto Sans', 'Noto Sans CJK SC', sans-serif;
}
.search::placeholder {
  color: #c3c7ce;
}
.user {
  gap: 5px;
  margin: 0 8px 0 5px;
}
.user .caret {
  margin-left: 1px;
}
.drop {
  gap: 6px;
  margin: 0 9px 0 1px;
}
.vline {
  width: 1px;
  height: 18px;
  margin-right: 9px;
  background: #4b5361;
}
.win {
  display: flex;
  gap: 12px;
  margin: 0 7px 0 60px;
}
.menu-bar {
  display: flex;
  align-items: center;
  gap: 25px;
  box-sizing: border-box;
  height: 21px;
  padding: 2px 0 0 14px;
  border-bottom: 1px solid #3b4350;
}
.doc-win {
  display: flex;
  gap: 6px;
  margin: 0 3px 0 auto;
}
.file-tabs {
  display: flex;
  align-items: flex-end;
  height: 25px;
  padding-left: 18px;
}
.ftab {
  box-sizing: border-box;
  height: 22px;
  justify-content: flex-start;
  background: #2e3643;
  clip-path: polygon(7px 0, calc(100% - 6px) 0, 100% 100%, 0 100%);
}
.ftab.start {
  width: 126px;
  padding-left: 14px;
}
.ftab.active {
  gap: 10px;
  width: 206px;
  padding-left: 10px;
  background: #3b4453;
  color: #fff;
}
.ftab.add {
  justify-content: center;
  width: 26px;
  height: 16px;
  margin: 0 0 3px 2px;
}
.toolbars {
  display: flex;
  flex-direction: column;
  gap: 3px;
  box-sizing: border-box;
  height: 59px;
  padding-top: 4px;
  background: #3b4453;
}
.row {
  display: flex;
}
.bar {
  display: flex;
  align-items: center;
  height: 22px;
  border: 1px solid #2b333e;
}
.grip {
  width: 8px;
  height: 16px;
  background: repeating-linear-gradient(#3b4453 0 1px, #a9afb8 1px 2px) 2px 0 / 1px 16px no-repeat, repeating-linear-gradient(#3b4453 0 1px, #a9afb8 1px 2px) 4px 0 / 1px 16px no-repeat;
}
.hgrip {
  height: 4px;
  width: 14px;
  background: repeating-linear-gradient(90deg, #a9afb8 0 1px, transparent 1px 2px) 0 0 / 14px 1px no-repeat, repeating-linear-gradient(90deg, #a9afb8 0 1px, transparent 1px 2px) 0 2px / 14px 1px no-repeat;
}
.tool {
  width: 23px;
  height: 22px;
}
.sep {
  box-sizing: border-box;
  width: 6px;
  height: 20px;
  border-left: 2px solid #222933;
  border-right: 3px solid #3b4453;
  background: #f0f1f3;
}
.caret.cell {
  margin: 0 4px 0 3px;
}
.combo {
  box-sizing: border-box;
  display: flex;
  align-items: center;
  height: 22px;
  padding: 0 6px 0 3px;
  background: #fff;
  color: #111;
}
.combo select {
  flex: 1;
  min-width: 0;
  padding: 2px 0 0;
  border: 0;
  background: none;
  color: inherit;
  font: inherit;
  opacity: 1;
  appearance: none;
}
.chev {
  width: 4px;
  height: 4px;
  margin: -3px 1px 0 0;
  flex: none;
  border: solid #555;
  border-width: 0 1px 1px 0;
  transform: rotate(45deg);
}
.swatch {
  width: 11px;
  height: 11px;
  margin-right: 5px;
  flex: none;
  border: 1px solid #111;
  background: #00ffff;
}
.layer { width: 300px; }
.layer svg { margin: 0 2px 0 1px; }
.color { width: 150px; }
.ltype { width: 160px; }
.lweight { width: 125px; }
.plot { width: 119px; padding-left: 10px; background: #f8f8f8; color: #777; }
.plot .chev { border-color: #bbb; }
.style { width: 120px; padding-left: 19px; }
.stroke {
  height: 1px;
  margin: 0 6px 0 2px;
  background: #000;
}
.ltype .stroke { width: 60px; }
.lweight .stroke { width: 35px; }
.work {
  display: flex;
  flex: 1;
  min-height: 500px;
  background: #3b4453;
}
.side {
  flex: none;
  width: 29px;
}
.side.right {
  width: 28px;
  padding-left: 4px;
}
.vbar {
  display: flex;
  flex-direction: column;
  align-items: center;
  box-sizing: border-box;
  width: 24px;
  padding: 2px 0 0;
  border: 1px solid #2b333e;
}
.vbar button {
  height: 22px;
  width: 22px;
}
.vbar .hgrip {
  margin: 1px 0;
}
.canvas {
  position: relative;
  flex: 1;
  overflow: hidden;
}
.drawing {
  position: absolute;
  inset: 0;
  width: 100%;
  height: 100%;
}
.ln {
  fill: none;
  shape-rendering: crispEdges;
}
.green { stroke: #00ff00; }
.cyan { stroke: #00ffff; }
.brown { stroke: #a55200; }
.red { stroke: #ff0000; }
.sky { stroke: #87d7ff; }
.yellow { stroke: #ffff00; }
.white { stroke: #fff; }
.num { fill: #fff; }
.big { font: 19px 'DejaVu Sans', sans-serif; }
.letter { font: 20px 'Liberation Serif', serif; }
.frac { font: 13px 'Liberation Serif', serif; }
.dim { font: 12px 'Liberation Sans', sans-serif; }
.cad { font-family: 'Liberation Sans', sans-serif; }
.thin { font-family: Lato, sans-serif; font-weight: 300; }
.small { font-size: 8px; }
.local { font-size: 10px; }
.value { font-size: 11px; }
.cn { font-family: 'Liberation Sans', 'Noto Sans CJK SC', sans-serif; }
.bold { font-weight: bold; }
.leaf { fill: #52a500; }
.view-label { font-size: 13px; fill: #06080b; }
.viewcube {
  position: absolute;
  top: 15px;
  right: 16px;
  display: flex;
  flex-direction: column;
  align-items: center;
  width: 134px;
  color: #a2a5aa;
  font-size: 18px;
  font-weight: bold;
  line-height: 24px;
}
.viewcube::before {
  content: '';
  position: absolute;
  top: 6px;
  width: 94px;
  height: 94px;
  border: 13px solid rgba(125, 127, 136, 0.4);
  border-radius: 50%;
}
.dir {
  position: relative;
}
.mid {
  display: flex;
  align-items: center;
  justify-content: space-between;
  width: 132px;
  margin: 17px 0 19px;
}
.face {
  position: relative;
  width: 52px;
  height: 52px;
  background: rgba(208, 208, 210, 0.85);
  color: #5c6170;
  font-size: 30px;
  font-weight: normal;
}
.wcs {
  position: relative;
  gap: 6px;
  width: 48px;
  height: 18px;
  margin-top: 17px;
  border-radius: 4px;
  background: rgba(176, 178, 194, 0.8);
  color: #666a7c;
  font-size: 11px;
  font-weight: normal;
}
.command {
  display: flex;
  margin-top: 2px;
  border-top: 1px solid #3b4453;
}
.cmd-side {
  display: flex;
  flex-direction: column;
  align-items: center;
  justify-content: space-between;
  width: 25px;
  padding: 4px 0 2px;
  background: #2c343f;
}
.cmd-main {
  flex: 1;
}
.history {
  margin: 0;
  height: 29px;
  padding-left: 2px;
  background: #c8c8c8;
  color: #111;
  font: 18px/28px 'Noto Sans CJK SC', sans-serif;
  white-space: pre;
}
.history b {
  font: 16px/28px 'DejaVu Sans Mono', monospace;
}
.prompt {
  display: flex;
  align-items: center;
  height: 24px;
  padding-left: 4px;
  border-top: 1px solid #111;
  background: #fff;
}
.caret.dark {
  margin: 0 6px 0 3px;
  border-width: 4px 4px 0;
  border-top-color: #666;
}
.prompt input {
  flex: 1;
  height: 22px;
  padding: 0 0 2px;
  border: 0;
  background: none;
  font: italic 18px/22px 'Noto Sans CJK SC', sans-serif;
}
.prompt input::placeholder {
  color: #858585;
}
.bottom {
  display: flex;
  justify-content: space-between;
  height: 33px;
}
.layouts {
  display: flex;
  align-items: flex-start;
  gap: 4px;
  margin-left: 11px;
}
.ltab {
  width: 47px;
  height: 20px;
  background: #2b333f;
  clip-path: polygon(0 0, 100% 0, calc(100% - 5px) 100%, 5px 100%);
}
.ltab.on {
  background: #3b4453;
  color: #fff;
  font-weight: bold;
}
.ltab.second {
  width: 49px;
}
.ltab.plus {
  width: 26px;
}
.status {
  display: flex;
  gap: 3px;
  margin: 3px 1px 0 0;
}
.sgroup {
  display: flex;
  align-items: center;
  height: 23px;
  background: #37404e;
}
.sgroup button {
  width: 23px;
  height: 23px;
}
.sgroup .txt {
  width: 30px;
  color: #e3e6ea;
}
.sgroup .ratio {
  width: 24px;
  color: #e3e6ea;
}
.sgroup .lit {
  background: #5a86b8;
}
.caret.scell {
  margin: 0 5px 0 6px;
}
</style>
